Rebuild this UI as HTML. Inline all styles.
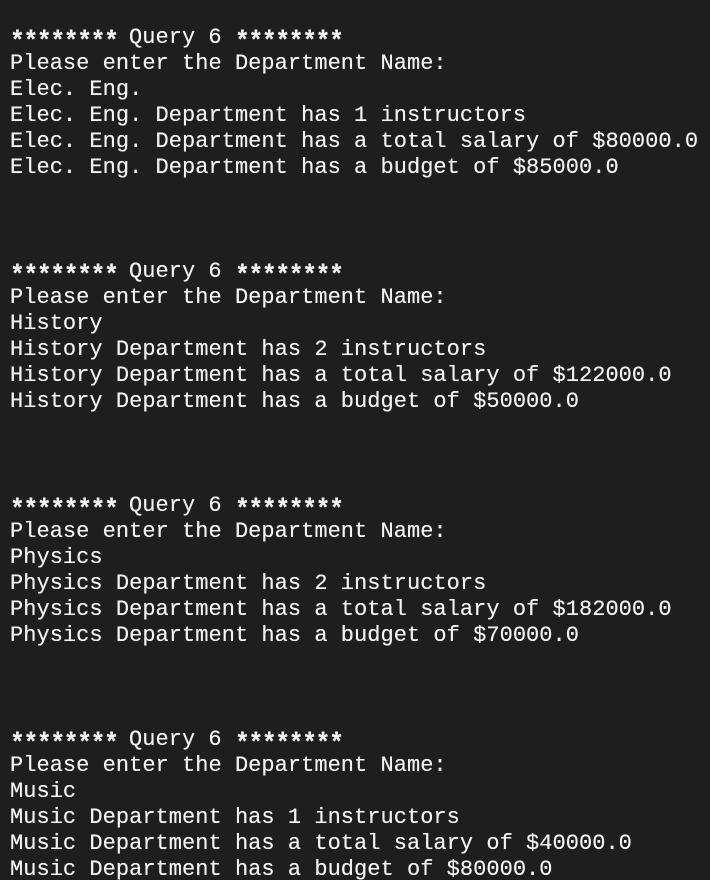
<!DOCTYPE html>
<html><head><meta charset="utf-8"><style>
html,body{margin:0;padding:0;background:#1e1e1e;width:710px;height:880px;overflow:hidden}
pre{margin:0;padding:25px 0 0 10px;font-family:"Liberation Mono",monospace;font-size:22px;line-height:26px;color:#f2f2f2;letter-spacing:0.03px;text-shadow:0 0 0.4px #f2f2f2}
.s{display:inline-block;width:105.8px;transform:translateY(5px) scale(1.12,1.2);transform-origin:left center;font-weight:bold;letter-spacing:-1.2px}
</style></head><body><pre><span class="s">********</span> Query 6 <span class="s">********</span>
Please enter the Department Name:
Elec. Eng.
Elec. Eng. Department has 1 instructors
Elec. Eng. Department has a total salary of $80000.0
Elec. Eng. Department has a budget of $85000.0



<span class="s">********</span> Query 6 <span class="s">********</span>
Please enter the Department Name:
History
History Department has 2 instructors
History Department has a total salary of $122000.0
History Department has a budget of $50000.0



<span class="s">********</span> Query 6 <span class="s">********</span>
Please enter the Department Name:
Physics
Physics Department has 2 instructors
Physics Department has a total salary of $182000.0
Physics Department has a budget of $70000.0



<span class="s">********</span> Query 6 <span class="s">********</span>
Please enter the Department Name:
Music
Music Department has 1 instructors
Music Department has a total salary of $40000.0
Music Department has a budget of $80000.0
</pre></body></html>
